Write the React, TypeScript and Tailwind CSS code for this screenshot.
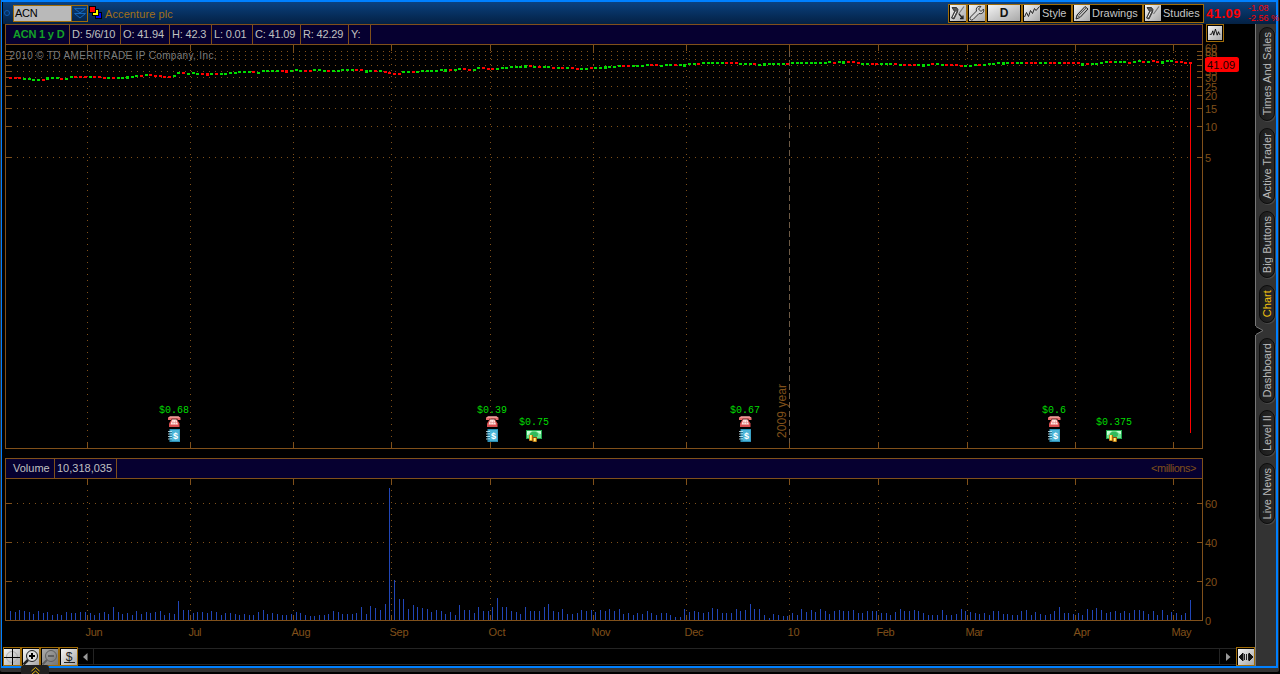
import React from "react";

const BROWN = "#80501a";
const GREEN = "#00dc00";
const RED = "#ff0000";

const VOLUMES = [
  9, 8, 10, 9, 8, 6, 9, 7, 8, 5, 6, 5, 8, 7, 7, 8, 8, 7, 5, 7, 8, 6, 13, 8, 6, 7, 5, 9, 6, 8, 7, 8, 9, 5, 7, 6, 19, 10, 10, 7,
  8, 8, 7, 9, 8, 5, 7, 7, 6, 5, 6, 5, 5, 8, 10, 6, 7, 6, 5, 5, 6, 8, 7, 5, 4, 4, 5, 5, 6, 9, 8, 6, 6, 6, 7, 13, 6, 14, 12, 10,
  16, 132, 40, 21, 21, 11, 15, 13, 12, 11, 8, 10, 9, 6, 8, 5, 15, 10, 10, 7, 13, 9, 9, 13, 22, 13, 13, 9, 8, 6, 13, 9, 9, 9, 13, 16, 9, 8, 11, 6,
  6, 7, 10, 9, 10, 8, 10, 9, 11, 9, 11, 6, 7, 5, 7, 6, 9, 7, 5, 7, 7, 5, 3, 3, 11, 8, 9, 8, 7, 8, 12, 11, 7, 7, 7, 11, 9, 10, 16, 11,
  11, 5, 2, 6, 5, 4, 4, 7, 5, 11, 8, 10, 8, 11, 9, 6, 9, 10, 9, 9, 10, 7, 7, 9, 9, 9, 7, 7, 5, 8, 11, 9, 9, 10, 9, 7, 5, 5, 5, 10,
  5, 5, 6, 11, 9, 8, 7, 6, 7, 5, 9, 9, 6, 6, 5, 5, 9, 10, 5, 8, 6, 5, 6, 9, 13, 7, 7, 6, 7, 5, 11, 10, 12, 10, 7, 8, 9, 7, 9, 7,
  10, 10, 9, 6, 9, 5, 10, 5, 8, 7, 5, 7, 20,
];

// Runs of daily marks: height on the chart, then one letter per day (g = up, r = down).
const RUNS: [number, string][] = [
  [77, "rrr"], [78, "gg"], [79, "ggr"], [77, "ggg"], [78, "rg"], [76, "grrrgrr"], [77, "rgrgg"], [76, "gg"], [75, "gr"], [74, "gr"],
  [75, "rr"], [76, "rr"], [75, "g"], [72, "gr"], [73, "g"], [72, "g"], [73, "gr"], [73, "rgrgg"], [72, "gg"], [71, "gggr"], [72, "g"],
  [70, "ggggrrg"], [69, "g"], [70, "grr"], [69, "gg"], [70, "grgg"], [69, "gggrr"], [70, "ggrg"], [71, "r"],
  [72, "r"], [73, "rr"], [71, "ggrg"], [70, "gggg"], [69, "ggrg"], [68, "gr"], [69, "rg"], [67, "gr"], [68, "rrg"], [67, "gg"],
  [66, "ggg"], [65, "gr"], [66, "grgg"], [67, "rgrgr"], [68, "rgg"], [67, "rgg"], [66, "ggg"], [65, "grrggg"], [64, "grr"], [65, "g"],
  [64, "ggrgg"], [63, "ggr"], [62, "gggggrrr"], [63, "gggr"], [64, "g"], [63, "gggggr"], [62, "gggggggg"], [61, "g"], [62, "r"],
  [61, "ggrr"], [62, "r"], [63, "ggrrgggr"], [64, "grrrggg"], [63, "rg"],
  [64, "grrr"], [65, "rgg"], [64, "grg"], [63, "gg"], [62, "ggg"], [62, "r"], [62, "ggrrrggrrgrrr"], [62, "r"], [63, "grgg"], [62, "g"],
  [61, "grggg"], [62, "r"], [61, "g"], [60, "g"], [61, "rg"], [60, "r"], [61, "rg"], [60, "gg"], [61, "rr"], [62, "rr"],
];
const MARKS: { y: number; up: boolean }[] = RUNS.flatMap(([y, s]) => s.split("").map((c) => ({ y, up: c === "g" })));
const dayX = (i: number) => Math.floor(10.4 + i * 4.683);

const MONTHS: [string, number, number][] = [
  ["Jun", 87, 17], ["Jul", 190, 13], ["Aug", 293, 19], ["Sep", 391, 19], ["Oct", 490, 17], ["Nov", 593, 19],
  ["Dec", 686, 19], ["10", 789, 12], ["Feb", 878, 18], ["Mar", 967, 18], ["Apr", 1075, 17], ["May", 1173, 20],
];
const PRICE_LINES = [51, 55, 59, 65, 71, 77, 86, 95, 108, 126, 157];
const PRICE_LABELS: [string, number][] = [
  ["60", 48], ["55", 52], ["50", 56], ["35", 72], ["30", 78], ["25", 87], ["20", 96], ["15", 109], ["10", 127], ["5", 158],
];

function Label({ x, y, w, children, fill = BROWN, size = 11 }: { x: number; y: number; w?: number; children: string; fill?: string; size?: number }) {
  return (
    <text x={x} y={y} fill={fill} stroke="none" fontSize={size} textLength={w} lengthAdjust="spacing">
      {children}
    </text>
  );
}

function Phone() {
  return (
    <g>
      <path d="M0 3V1.500L2 .4h8.500L12.500 1.500V4H9.500V2.700h-6V4H0Z" fill="#e86a6a" />
      <path d="M2 .5h8.500l1.500 1H.6Z" fill="#ffc4c0" />
      <path d="M3.500 3.500h5.500l2.500 4V11H1V7.500Z" fill="#d94f50" />
      <path d="M4.200 3.500h4.200l1.600 5h-7.500Z" fill="#ffe7e3" />
      <path d="M5 4.500v4M7.500 4.500v4M4 6.500h5" stroke="#e09090" strokeWidth=".6" />
    </g>
  );
}

function Book() {
  return (
    <g>
      <rect x="1.500" y="0" width="10.500" height="13" fill="#2b8fb5" />
      <rect x="2.500" y="1" width="9" height="11" fill="#4cb5d8" />
      <path d="M0 2.500h4M0 5h4M0 7.500h4M0 10h4" stroke="#c9effa" strokeWidth=".8" />
      <path d="M1 3.500h3M1 6h3M1 8.500h3M1 11h3" stroke="#126080" strokeWidth=".7" />
      <text x="5" y="9.700" fontSize="9" fontWeight="bold" fill="#fff">$</text>
    </g>
  );
}

function Cash() {
  return (
    <g>
      <rect width="16" height="9" fill="#20a54b" />
      <rect x="1" y="1" width="14" height="7" fill="#6fe192" />
      <ellipse cx="8" cy="4.500" rx="4" ry="2.800" fill="#2fba5a" />
      <path d="M1 1h5L2 5H1Zm14 0h-5l4 3h1Z" fill="#c5ffd3" />
      <path d="M3 5h4v2h4v5H6.500v-1H3Z" fill="#8e4c0a" />
      <path d="M3.500 5h2.700v5.500H3.500ZM7.500 8h2.700v3.500H7.500Z" fill="#ffd43b" />
      <path d="M4.500 5v5M8.500 8v3" stroke="#fff6a0" strokeWidth=".8" />
    </g>
  );
}

function PriceChart() {
  return (
    <svg width="1249" height="413" viewBox="5 45 1249 413" className="block shrink-0 overflow-visible" shapeRendering="crispEdges" fontFamily="Liberation Sans, Arial, sans-serif">
      {PRICE_LINES.map((y) => (
        <g key={y} stroke={BROWN}>
          <path d={`M5 ${y + 0.5}h7M1197 ${y + 0.5}h6`} />
          <path d={`M17 ${y + 0.5}H1190`} strokeDasharray="1 5" />
        </g>
      ))}
      {MONTHS.map(([m, x]) => (
        <g key={m} stroke={BROWN}>
          <path d={`M${x + 0.5} 45v6M${x + 0.5} 443v5`} />
          {m === "10" ? (
            <path d={`M${x + 0.5} 51V443`} stroke="#6d5a45" strokeDasharray="6 3" />
          ) : (
            <path d={`M${x + 0.5} 52V443`} strokeDasharray="1 5" />
          )}
        </g>
      ))}
      <path d="M5.500 45V448.500H1202.500V45" fill="none" stroke={BROWN} />
      <Label x={9.500} y={58.500} w={207} fill="#7c7c7c" size={10}>2010 © TD AMERITRADE IP Company, Inc.</Label>
      {MARKS.map((m, i) => (
        <rect key={i} x={dayX(i) - 1} y={m.y} width={3} height={i % 17 === 8 ? 3 : 2} fill={m.up ? GREEN : RED} />
      ))}
      <path d="M1190.500 62V433" stroke={RED} />
      {PRICE_LABELS.map(([t, y]) => (
        <Label key={t} x={1205} y={y + 4}>{t}</Label>
      ))}
      <g shapeRendering="auto">
        <path d="M1205 58.500l2-1.500h29.500a2.500 2.500 0 0 1 2.500 2.500v10a2.500 2.500 0 0 1-2.500 2.500H1207l-2-2Z" fill={RED} />
        <Label x={1207} y={68.500} w={28} fill="#180000">41.09</Label>
        <text transform="translate(786 438) rotate(-90)" fontSize="12" fill={BROWN} textLength="54">2009 year</text>
        {([["$0.68", 174], ["$0.39", 492], ["$0.67", 745], ["$0.6", 1054]] as [string, number][]).map(([t, x]) => (
          <g key={x}>
            <text x={x} y="413" textAnchor="middle" fill={GREEN} fontSize="10" fontFamily="Liberation Mono, monospace">{t}</text>
            <g transform={`translate(${x - 6} 416)`}><Phone /></g>
            <g transform={`translate(${x - 6} 429)`}><Book /></g>
          </g>
        ))}
        {([["$0.75", 534], ["$0.375", 1114]] as [string, number][]).map(([t, x]) => (
          <g key={x}>
            <text x={x} y="425" textAnchor="middle" fill={GREEN} fontSize="10" fontFamily="Liberation Mono, monospace">{t}</text>
            <g transform={`translate(${x - 8} 430)`}><Cash /></g>
          </g>
        ))}
      </g>
    </svg>
  );
}

function VolumeChart() {
  return (
    <svg width="1249" height="168" viewBox="5 479 1249 168" className="block shrink-0 overflow-visible" shapeRendering="crispEdges" fontFamily="Liberation Sans, Arial, sans-serif">
      {[503, 542, 581].map((y, k) => (
        <g key={y} stroke={BROWN}>
          <path d={`M5 ${y + 0.5}h7M1197 ${y + 0.5}h6`} />
          <path d={`M17 ${y + 0.5}H1190`} strokeDasharray="1 5" />
          <Label x={1205} y={y + 5}>{String(60 - k * 20)}</Label>
        </g>
      ))}
      {MONTHS.map(([m, x, w]) => (
        <g key={m}>
          <path d={`M${x + 0.5} 479v6M${x + 0.5} 615v5`} stroke={BROWN} />
          <path d={`M${x + 0.5} 490V614`} stroke={BROWN} strokeDasharray="1 5" />
          <Label x={x - 1.5} y={636} w={w}>{m}</Label>
        </g>
      ))}
      {VOLUMES.map((v, i) => (
        <rect key={i} x={dayX(i)} y={620 - v} width="1" height={v} fill="#2146b8" />
      ))}
      <path d="M5.500 479V620.500H1202.500V479" fill="none" stroke={BROWN} />
      <Label x={1205} y={625}>0</Label>
    </svg>
  );
}

const TILE = "flex items-center justify-center bg-linear-to-br from-[#f4f4f4] to-[#a8a8a8]";

function Tile({ children, className = "" }: { children: React.ReactNode; className?: string }) {
  return (
    <div className={`${TILE} h-4 w-4 shrink-0 ${className}`}>
      <svg width="16" height="16" viewBox="0 0 16 16" fill="none" stroke="#222">{children}</svg>
    </div>
  );
}

const brush = (
  <>
    <path d="M14 1.500 8.500 9" stroke="#777" strokeWidth="1.200" />
    <path d="M2 2.500h4.500L8 4.500 7.500 7 4 14 1.500 13 4.500 6.500Z" fill="#555" stroke="#222" strokeWidth=".8" />
    <path d="M6 6.500 3 12.500" stroke="#eee" />
  </>
);

function ToolButton({ label, width, children }: { label?: string; width: string; children: React.ReactNode }) {
  return (
    <div className={`flex h-[19px] items-center border border-[#a06c08] bg-black pl-px ${width}`}>
      {children}
      {label && <span className="pl-[2px] text-[11px] leading-none whitespace-nowrap text-[#c4c4c4]">{label}</span>}
    </div>
  );
}

function Header() {
  return (
    <div className="ml-px flex h-[22px] shrink-0 items-center bg-linear-to-b from-[#0b4180] to-[#042144]">
      <div className="ml-px h-[6px] w-[6px] rounded-full border border-[#0c5cb4]" />
      <div className="ml-[3px] flex h-[17px] border border-[#a06c08]">
        <div className="flex w-[57px] items-center bg-[#b9b9b9] pl-px text-[11px] leading-none tracking-[-0.3px] text-black">ACN</div>
        <div className="flex w-4 items-center justify-center border-l border-[#a06c08]">
          <svg width="12" height="12" viewBox="0 0 12 12" fill="none" stroke="#1468bd"><path d="M.500 1.500h11L6 6Zm0 5h11L6 11Z" /></svg>
        </div>
      </div>
      <svg width="14" height="14" viewBox="0 0 14 14" className="ml-px" stroke="#000">
        <rect x="6.500" y="6.500" width="6" height="6" fill="#0000ff" />
        <rect x="3.500" y="3.500" width="6" height="6" fill="#ffff00" />
        <rect x=".5" y=".5" width="6" height="6" fill="#ff0000" />
      </svg>
      <span className="mt-[2px] ml-[2px] text-[11px] leading-none tracking-[0.1px] text-[#a37018]">Accenture plc</span>
      <div className="ml-auto flex w-[328px] items-center">
        <ToolButton width="w-[19px]"><Tile>{brush}<path d="M9 9l4 4.500m0-3v3h-3" strokeWidth="1.300" /></Tile></ToolButton>
        <ToolButton width="w-[19px]">
          <Tile><path d="M14.500 4 12 6.500 9.500 4 12 1.500C9 .500 6.500 3 7.500 6L1.500 12a1.700 1.700 0 0 0 2.500 2.500L10 8.500c3 1 5.500-1.500 4.500-4.500Z" fill="#d6d6d6" stroke="#333" /></Tile>
        </ToolButton>
        <ToolButton width="w-[36px]">
          <div className={`${TILE} h-4 w-[32px] text-[12px] leading-none font-bold text-[#111]`}>D</div>
        </ToolButton>
        <ToolButton width="w-[50px]" label="Style"><Tile><path d="M.500 12 2.500 7.500l2 4 2-6 2 3 2-5 1.500 2L15.500 1.500" /></Tile></ToolButton>
        <ToolButton width="w-[71px]" label="Drawings"><Tile><path d="M2 14 3 10 11 1.500l3 2.500L6 12.500Z" fill="#bbb" /><path d="m5 10 7-7M3 10l3 2.500" stroke="#555" /></Tile></ToolButton>
        <ToolButton width="w-[61px]" label="Studies"><Tile>{brush}</Tile></ToolButton>
        <span className="ml-[2px] w-[42px] text-[13px] leading-none font-bold tracking-[0.5px] text-[#ff0000]">41.09</span>
        <div className="flex w-[28px] flex-col text-[9px] leading-[10px] whitespace-nowrap text-[#ff0000]">
          <span>-1.08</span>
          <span>-2.56 %</span>
        </div>
      </div>
    </div>
  );
}

const CELL = "flex items-center border-r border-[#80501a] pl-[2px] tracking-[-0.17px]";

function StatusRow() {
  const cells: [string, string][] = [
    ["D: 5/6/10", "w-[51px]"], ["O: 41.94", "w-[49px]"], ["H: 42.3", "w-[42px]"], ["L: 0.01", "w-[41px]"],
    ["C: 41.09", "w-[48px]"], ["R: 42.29", "w-[48px]"], ["Y:", "w-[22px]"],
  ];
  return (
    <div className="flex h-[21px] w-[1198px] border border-[#80501a] bg-[#060030] text-[11px] leading-none whitespace-nowrap text-[#c0c0c0]">
      <div className="flex w-[64px] items-center border-r border-[#80501a] pl-[7px] font-bold tracking-[-0.2px] text-[#14a028]">ACN 1 y D</div>
      {cells.map(([t, w]) => <div key={t} className={`${CELL} ${w}`}>{t}</div>)}
    </div>
  );
}

const VERT = "rotate-180 text-[11px] leading-none whitespace-nowrap [writing-mode:vertical-rl]";

function SideTab({ label, size, active }: { label: string; size: string; active?: boolean }) {
  return (
    <div className={`flex w-[16px] shrink-0 items-center justify-center rounded-[8px] border border-[#0c0c0c] bg-linear-to-r from-[#1b1b1b] to-[#292929] shadow-[1px_1px_0_#484848] ${size}`}>
      <span className={`${VERT} tracking-[0.08px] ${active ? "text-[#f0c010]" : "text-[#b8b8b8]"}`}>{label}</span>
    </div>
  );
}

function BottomBar() {
  const box = "flex h-[19px] w-[19px] shrink-0 items-center justify-center border border-[#a06c08] bg-black";
  return (
    <div className="ml-px flex h-[19px] shrink-0">
      <div className={`${box} !w-[18px]`}><Tile><circle cx="8" cy="8" r="5.500" stroke="#aaa" /><path d="M8.500 0v16M0 8.500h16" stroke="#000" /></Tile></div>
      <div className={box}><Tile><circle cx="9" cy="7" r="5.500" fill="#ddd" /><path d="M5 11 .500 15.500" strokeWidth="2.500" /><path d="M9 4v6M6 7h6" stroke="#000" strokeWidth="2" /></Tile></div>
      <div className={box}><Tile className="opacity-70"><circle cx="9" cy="7" r="5.500" stroke="#888" /><path d="M5 11 .500 15.500" stroke="#888" strokeWidth="2" /><path d="M6 7h6" stroke="#888" strokeWidth="2" /></Tile></div>
      <div className={box}><Tile><text x="8" y="11.500" fontSize="12" textAnchor="middle" fill="#222" stroke="none">$</text><path d="M3 13.500h11" /></Tile></div>
      <div className="my-px flex flex-1 border-y border-[#242424]">
        <div className="flex w-[16px] items-center justify-center border-r border-[#242424]">
          <svg width="5" height="8" viewBox="0 0 5 8"><path d="M4.500 0v8L0 4Z" fill="#999" /></svg>
        </div>
        <div className="flex-1" />
        <div className="flex w-[17px] items-center justify-center border-l border-[#242424]">
          <svg width="5" height="8" viewBox="0 0 5 8"><path d="M0 0v8l4.500-4Z" fill="#999" /></svg>
        </div>
      </div>
      <div className={box}><Tile><path d="M1 8l4-4v8ZM15 8l-4-4v8Z" fill="#111" stroke="#111" /><path d="M6.500 5v6M8.500 5v6M10.500 5v6" /></Tile></div>
    </div>
  );
}

export default function App() {
  return (
    <div className="relative h-[674px] w-[1280px] overflow-hidden bg-black font-['Liberation_Sans',Arial,sans-serif]">
      <div className="flex h-[672px] w-[1279px] rounded-b-[2px] bg-[#333] pr-px pb-1 pl-px">
        <div className="flex w-full flex-col border-t-2 border-r-2 border-b-2 border-l border-[#0080ff] bg-black">
          <Header />
          <div className="flex min-h-0 flex-1">
            <div className="flex w-[1253px] flex-col">
              <div className="ml-[3px] flex h-[21px] shrink-0">
                <StatusRow />
                <div className="ml-[3px] flex h-[18px] w-[18px] items-center justify-center border border-[#a06c08]">
                  <Tile className="h-[14px] w-[14px] overflow-hidden"><path d="M2 9.500h2l1.500-4 1 5 2-7 2 7 1.500-4 1 3H14" stroke="#000" /></Tile>
                </div>
              </div>
              <div className="ml-[3px]"><PriceChart /></div>
              <div className="ml-[3px] flex h-[21px] w-[1198px] shrink-0 border border-[#80501a] bg-[#060030] text-[11px] leading-none text-[#c0c0c0]">
                <div className="flex w-[49px] items-center border-r border-[#80501a] pl-[7px]">Volume</div>
                <div className="flex w-[62px] items-center border-r border-[#80501a] pl-[2px]">10,318,035</div>
                <div className="ml-auto flex items-center pr-[6px] tracking-[-0.45px] text-[#80501a]">&lt;millions&gt;</div>
              </div>
              <div className="ml-[3px]"><VolumeChart /></div>
              <BottomBar />
            </div>
            <div className="flex w-[21px] flex-col items-end gap-[7px] border-l border-[#777] bg-[#333] pt-[3px] pr-px">
              <SideTab label="Times And Sales" size="h-[94px]" />
              <SideTab label="Active Trader" size="h-[76px]" />
              <SideTab label="Big Buttons" size="h-[67px]" />
              <SideTab label="Chart" size="h-[38px]" active />
              <div className="-my-[6px] -mr-px flex h-[13px] w-[21px] shrink-0">
                <svg width="9" height="13" viewBox="0 0 9 13"><path d="M0 0v2l8 4.500L0 11v2" fill="#000" stroke="#777" /><path d="M0 2v9" stroke="#000" strokeWidth="2" /></svg>
              </div>
              <SideTab label="Dashboard" size="h-[65px]" />
              <SideTab label="Level II" size="h-[46px]" />
              <SideTab label="Live News" size="h-[61px]" />
            </div>
          </div>
        </div>
      </div>
      <div className="absolute top-[665px] left-[21px] flex h-[9px] w-[28px] justify-center rounded-t-[3px] bg-[#202020] pt-[2px]">
        <svg width="9" height="7" viewBox="0 0 9 7" fill="none" stroke="#e8b810"><path d="M.500 4 4.500.500 8.500 4M.500 7.500 4.500 4l4 3.500" /></svg>
      </div>
    </div>
  );
}
